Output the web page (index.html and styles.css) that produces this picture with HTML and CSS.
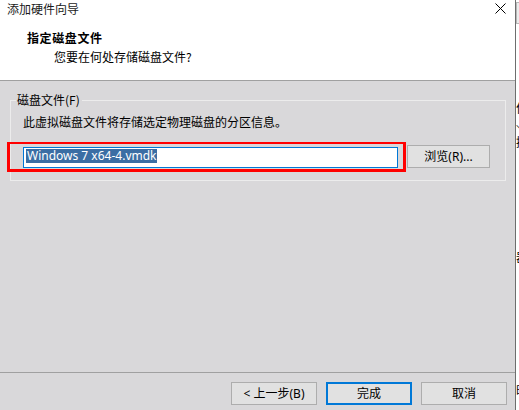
FILE: index.html
```html
<!DOCTYPE html>
<html lang="zh-CN">
<head>
<meta charset="utf-8">
<title>添加硬件向导</title>
<link rel="stylesheet" href="styles.css">
</head>
<body>
<div class="screen">
  <div class="dialog">
    <div class="header">
      <div class="titlebar">
        <span class="title">添加硬件向导</span>
        <svg class="close" width="11" height="11" viewBox="0 0 11 11" aria-label="关闭">
          <path d="M0.5 0.5 L10.5 10.5 M10.5 0.5 L0.5 10.5" />
        </svg>
      </div>
      <div class="heading">指定磁盘文件</div>
      <div class="subheading">您要在何处存储磁盘文件?</div>
    </div>

    <div class="body">
      <fieldset class="group">
        <legend>磁盘文件(F)</legend>
        <p class="desc">此虚拟磁盘文件将存储选定物理磁盘的分区信息。</p>
        <div class="filerow">
          <div class="field"><span class="sel">Windows 7 x64-4.vmdk</span></div>
          <button class="btn browse" type="button">浏览(R)...</button>
          <div class="mark"></div>
        </div>
      </fieldset>
    </div>

    <div class="footer">
      <button class="btn" type="button">&lt; 上一步(B)</button>
      <button class="btn primary" type="button">完成</button>
      <button class="btn" type="button">取消</button>
    </div>
  </div>

  <div class="behind">
    <div class="scroll-cap"></div>
    <div class="frag f1">何</div>
    <div class="frag f2">＼</div>
    <div class="frag f3">接</div>
    <div class="frag f4">器</div>
    <div class="frag f5">时</div>
  </div>
</div>
</body>
</html>
```

FILE: styles.css
```css
* {
  box-sizing: border-box;
}

html,
body {
  margin: 0;
  padding: 0;
  background: #ffffff;
}

body {
  font-family: "Noto Sans", "Noto Sans CJK SC", sans-serif;
  font-size: 12px;
  line-height: 16px;
  color: #000000;
}

.screen {
  display: flex;
  width: 519px;
  height: 410px;
  overflow: hidden;
}

/* wizard window */
.dialog {
  width: 516px;
  height: 410px;
  flex: none;
  display: flex;
  flex-direction: column;
  background: #d9d8da;
  border-right: 1px solid #6e6e6e;
}

.header {
  height: 81px;
  flex: none;
  background: #ffffff;
  border-bottom: 1px solid #a0a0a0;
}

.titlebar {
  display: flex;
  justify-content: space-between;
  align-items: flex-start;
  padding: 1px 9px 0 7px;
  height: 17px;
}

.title {
  font-family: "Noto Sans CJK SC", sans-serif;
  color: #1a1a1a;
}

.close {
  margin-top: 2px;
  fill: none;
  stroke: #000000;
  stroke-width: 1;
}

.heading {
  margin-top: 13px;
  padding-left: 27px;
  font-family: "Noto Sans CJK SC", sans-serif;
  font-weight: bold;
  letter-spacing: 0.6px;
}

.subheading {
  margin-top: 3px;
  padding-left: 54px;
  font-family: "Noto Sans CJK SC", sans-serif;
}

.body {
  flex: 1;
  padding: 11px 0 0 10px;
}

.group {
  width: 496px;
  margin: 0;
  padding: 0 0 12px 0;
  border: 1px solid #ececec;
}

.group legend {
  margin-left: 5px;
  padding: 0 2px 0 1px;
  font-family: "Noto Sans CJK SC", sans-serif;
}

.desc {
  margin: 6px 0 0 12px;
  font-family: "Noto Sans CJK SC", sans-serif;
}

.filerow {
  position: relative;
  display: flex;
  align-items: flex-end;
  height: 23px;
  margin-top: 15px;
  padding-left: 12px;
}

.field {
  width: 375px;
  height: 21px;
  background: #ffffff;
  border: 1px solid #0078d7;
  padding: 0 0 0 2px;
}

.sel {
  display: inline-block;
  height: 14px;
  padding: 0 1px;
  line-height: 13px;
  background: #3b6ea4;
  color: #ffffff;
  font-family: "Noto Sans", sans-serif;
  font-size: 12px;
}

/* red highlight frame drawn around the file field */
.mark {
  position: absolute;
  left: -4px;
  top: -3px;
  width: 399px;
  height: 30px;
  border: 3px solid #ff0000;
  border-top-width: 2px;
  pointer-events: none;
}

.btn {
  height: 23px;
  margin: 0;
  padding: 0;
  background: #e1e1e1;
  border: 1px solid #adadad;
  border-radius: 0;
  font-family: "Noto Sans", "Noto Sans CJK SC", sans-serif;
  font-size: 12px;
  line-height: 16px;
  color: #000000;
}

.browse {
  width: 83px;
  margin-left: 9px;
}

.footer {
  height: 38px;
  flex: none;
  display: flex;
  justify-content: flex-end;
  align-items: flex-start;
  gap: 9px;
  padding: 9px 8px 0 0;
  border-top: 1px solid #a0a0a0;
}

.footer .btn {
  width: 86px;
}

.footer .primary {
  border: 2px solid #0078d7;
}

/* sliver of the window behind */
.behind {
  flex: none;
  width: 3px;
  height: 410px;
  overflow: hidden;
  background: #ffffff;
  font-family: "Noto Sans CJK SC", sans-serif;
  color: #000000;
}

.scroll-cap {
  width: 4px;
  height: 22px;
  margin-top: 2px;
  background: #ececec;
  border: 1px solid #b8b8b8;
}

.frag {
  width: 12px;
  height: 12px;
  line-height: 12px;
}

.f1 { margin-top: 78px; }
.f2 { margin-top: 11px; height: 10px; overflow: hidden; }
.f3 { margin-top: 1px; }
.f4 { margin-top: 103px; }
.f5 { margin-top: 121px; }
```
